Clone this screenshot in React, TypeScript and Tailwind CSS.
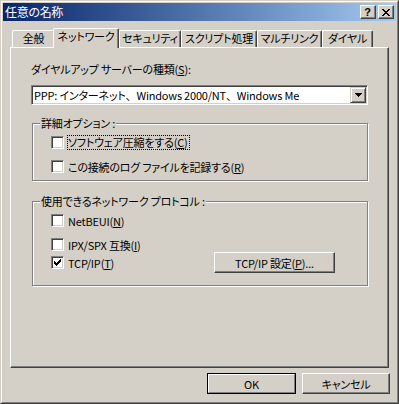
import React from "react";

function Check() {
  const cols = [2, 3, 4, 3, 2, 1, 0];
  return (
    <svg width="7" height="7" viewBox="0 0 7 7" shapeRendering="crispEdges">
      {cols.map((y, x) => (
        <rect key={x} x={x} y={y} width="1" height="3" fill="#000" />
      ))}
    </svg>
  );
}

function Checkbox({ checked }: { checked?: boolean }) {
  return (
    <div className="w-[13px] h-[13px] shrink-0 bg-white border border-t-[#808080] border-l-[#808080] border-r-white border-b-white shadow-[inset_1px_1px_0_#404040,inset_-1px_-1px_0_#d4d0c8] flex items-center justify-center">
      {checked && <Check />}
    </div>
  );
}

function CloseGlyph() {
  const rows = [
    "xx....xx",
    ".xx..xx.",
    "..xxxx..",
    "...xx...",
    "..xxxx..",
    ".xx..xx.",
    "xx....xx",
  ];
  return (
    <svg width="8" height="7" viewBox="0 0 8 7" shapeRendering="crispEdges">
      {rows.flatMap((r, y) =>
        r.split("").map((c, x) =>
          c === "x" ? <rect key={`${x}-${y}`} x={x} y={y} width="1" height="1" fill="#000" /> : null
        )
      )}
    </svg>
  );
}

function Arrow() {
  return (
    <svg width="7" height="4" viewBox="0 0 7 4" shapeRendering="crispEdges">
      <rect x="0" y="0" width="7" height="1" fill="#000" />
      <rect x="1" y="1" width="5" height="1" fill="#000" />
      <rect x="2" y="2" width="3" height="1" fill="#000" />
      <rect x="3" y="3" width="1" height="1" fill="#000" />
    </svg>
  );
}

export default function App() {
  return (
    <div className="w-[399px] h-[404px] bg-[#d4d0c8] border border-t-[#d4d0c8] border-l-[#d4d0c8] border-r-[#404040] border-b-[#404040] font-['Noto_Sans_CJK_JP',sans-serif] [font-feature-settings:'palt'] text-[11px] tracking-[-0.2px] leading-[14px] text-black select-none">
      <div className="h-full border border-t-white border-l-white border-r-[#808080] border-b-[#808080] p-px flex flex-col">
        {/* Title bar */}
        <div className="h-[18px] shrink-0 bg-linear-to-r from-[#0a246a] to-[#a6caf0] flex items-center pl-[2px] pr-[2px]">
          <span className="text-white text-[12px] tracking-[-0.3px] leading-[14px]">任意の名称</span>
          <div className="ml-auto flex gap-[2px]">
            <div className="w-[16px] h-[14px] bg-[#d4d0c8] border border-t-white border-l-white border-r-[#404040] border-b-[#404040] shadow-[inset_-1px_-1px_0_#808080] flex items-center justify-center">
              <span className="font-['Liberation_Sans',sans-serif] font-bold text-[11px] leading-[11px] pr-px">?</span>
            </div>
            <div className="w-[16px] h-[14px] bg-[#d4d0c8] border border-t-white border-l-white border-r-[#404040] border-b-[#404040] shadow-[inset_-1px_-1px_0_#808080] flex items-center justify-center">
              <CloseGlyph />
            </div>
          </div>
        </div>

        {/* Tabs */}
        <div className="mt-[7px] h-[19px] shrink-0 flex items-end pl-[9px] whitespace-nowrap">
          <div className="w-[43px] h-[17px] border-t border-l border-white border-r border-r-[#404040] shadow-[inset_-1px_0_0_#808080] rounded-t-[2px] text-center leading-[15px]">全般</div>
          <div className="relative z-10 -ml-[2px] -mb-px w-[66px] h-[20px] bg-[#d4d0c8] border-t border-l border-white border-r border-r-[#404040] shadow-[inset_-1px_0_0_#808080] rounded-t-[2px] text-center leading-[14px]">ネットワーク</div>
          <div className="w-[62px] h-[17px] border-t border-l border-white border-r border-r-[#404040] shadow-[inset_-1px_0_0_#808080] rounded-t-[2px] text-center leading-[15px]">セキュリティ</div>
          <div className="w-[76px] h-[17px] border-t border-l border-white border-r border-r-[#404040] shadow-[inset_-1px_0_0_#808080] rounded-t-[2px] text-center leading-[15px]">スクリプト処理</div>
          <div className="w-[65px] h-[17px] border-t border-l border-white border-r border-r-[#404040] shadow-[inset_-1px_0_0_#808080] rounded-t-[2px] text-center leading-[15px]">マルチリンク</div>
          <div className="w-[51px] h-[17px] border-t border-l border-white border-r border-r-[#404040] shadow-[inset_-1px_0_0_#808080] rounded-t-[2px] text-center leading-[15px]">ダイヤル</div>
        </div>

        {/* Panel */}
        <div className="mx-[7px] h-[321px] shrink-0 border border-t-white border-l-white border-r-[#404040] border-b-[#404040] shadow-[inset_-1px_-1px_0_#808080] pl-[20px] flex flex-col whitespace-nowrap">
          <div className="mt-[14px] h-[14px] leading-[14px]">
            ダイヤルアップ サーバーの種類(<u>S</u>):
          </div>
          <div className="mt-[9px] w-[337px] h-[20px] bg-white border border-t-[#808080] border-l-[#808080] border-r-white border-b-white shadow-[inset_1px_1px_0_#404040,inset_-1px_-1px_0_#d4d0c8] p-px flex">
            <div className="flex-1 pl-px flex items-center leading-[14px]">
              PPP: インターネット<span className="[font-feature-settings:normal]">、</span>Windows 2000/NT<span className="[font-feature-settings:normal]">、</span>Windows Me
            </div>
            <div className="w-[16px] h-full bg-[#d4d0c8] border border-t-[#d4d0c8] border-l-[#d4d0c8] border-r-[#404040] border-b-[#404040] shadow-[inset_1px_1px_0_#fff,inset_-1px_-1px_0_#808080] flex items-center justify-center">
              <Arrow />
            </div>
          </div>

          {/* Group 1 */}
          <div className="relative mt-[18px] ml-px w-[336px] h-[58px] border border-[#808080] shadow-[inset_1px_1px_0_#fff,1px_1px_0_#fff]">
            <span className="absolute left-[7px] top-[-8px] px-px bg-[#d4d0c8] leading-[14px]">詳細オプション :</span>
            <div className="pl-[18px] pt-[12px] flex flex-col">
              <div className="flex items-center h-[13px] gap-[3px]">
                <Checkbox />
                <span className="border border-dotted border-black h-[15px] leading-[13px] pr-px">ソフトウェア圧縮をする(<u>C</u>)</span>
              </div>
              <div className="mt-[11px] flex items-center h-[13px] gap-[4px]">
                <Checkbox />
                <span className="leading-[14px]">この接続のログ ファイルを記録する(<u>R</u>)</span>
              </div>
            </div>
          </div>

          {/* Group 2 */}
          <div className="relative mt-[20px] ml-px w-[336px] h-[85px] border border-[#808080] shadow-[inset_1px_1px_0_#fff,1px_1px_0_#fff]">
            <span className="absolute left-[7px] top-[-8px] px-px bg-[#d4d0c8] leading-[14px]">使用できるネットワーク プロトコル :</span>
            <div className="pl-[18px] pt-[12px] flex flex-col">
              <div className="flex items-center h-[13px] gap-[4px]">
                <Checkbox />
                <span className="leading-[14px]">NetBEUI(<u>N</u>)</span>
              </div>
              <div className="mt-[11px] flex items-center h-[13px] gap-[4px]">
                <Checkbox />
                <span className="leading-[14px]">IPX/SPX 互換(<u>I</u>)</span>
              </div>
              <div className="mt-px flex items-center h-[21px]">
                <div className="w-[163px] flex items-center gap-[4px]">
                  <Checkbox checked />
                  <span className="leading-[14px]">TCP/IP(<u>T</u>)</span>
                </div>
                <div className="w-[121px] h-[21px] border border-t-white border-l-white border-r-[#404040] border-b-[#404040] shadow-[inset_-1px_-1px_0_#808080] flex items-center justify-center leading-[14px]">
                  TCP/IP 設定(<u>P</u>)...
                </div>
              </div>
            </div>
          </div>
        </div>

        {/* Buttons */}
        <div className="mt-[5px] flex justify-end gap-[6px] pr-[6px]">
          <div className="w-[89px] h-[21px] border border-black">
            <div className="h-full border border-t-white border-l-white border-r-[#808080] border-b-[#808080] flex items-center justify-center leading-[14px]">OK</div>
          </div>
          <div className="w-[88px] h-[21px] border border-t-white border-l-white border-r-[#404040] border-b-[#404040] shadow-[inset_-1px_-1px_0_#808080] flex items-center justify-center leading-[14px]">キャンセル</div>
        </div>
      </div>
    </div>
  );
}
